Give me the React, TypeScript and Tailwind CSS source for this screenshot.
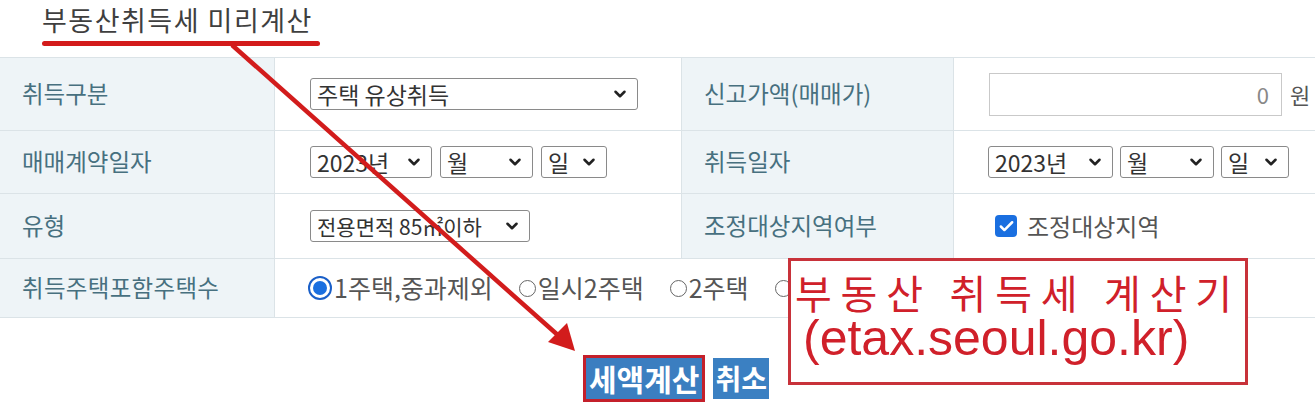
import { ChevronDown, Check } from 'lucide-react';

const kr = { fontFamily: '"Malgun Gothic", "Noto Sans CJK KR", sans-serif' };

function FakeSelect(props: { label: string; width: string; size?: string }) {
  return (
    <div
      className={`flex h-[32px] items-center justify-between rounded-[3px] border border-[#8a8a8a] bg-white pl-[6px] pr-[8px] text-[#333] ${props.size ?? 'text-[23px]'} ${props.width}`}
    >
      <span className="leading-none">{props.label}</span>
      <ChevronDown size={18} strokeWidth={3.4} className="shrink-0 text-[#222]" />
    </div>
  );
}

function Label(props: { text: string }) {
  return (
    <div className="flex items-center border-r border-b border-[#dbe3e7] bg-[#eef4f7] pl-[22px] text-[23.5px] text-[#47707f]">
      {props.text}
    </div>
  );
}

function Radio(props: { checked?: boolean; text?: string }) {
  return (
    <div className="flex items-center">
      {props.checked ? (
        <span className="flex h-[24px] w-[24px] items-center justify-center rounded-full border-[2px] border-[#1a5fc8] bg-white">
          <span className="h-[14px] w-[14px] rounded-full bg-[#1a6fe0]" />
        </span>
      ) : (
        <span className="h-[17px] w-[17px] rounded-full border-[1.5px] border-[#666] bg-white" />
      )}
      {props.text && <span className="ml-[2px]">{props.text}</span>}
    </div>
  );
}

export default function App() {
  return (
    <main className="relative h-[409px] w-[1315px] overflow-hidden bg-white" style={kr}>
      <div className="h-[57px] pl-[42px] pt-[3px]">
        <div className="text-[27px] leading-[33px] tracking-[1.5px] text-[#3f3f3f]">부동산취득세 미리계산</div>
        <div className="mt-[5px] h-[5px] w-[278px] rounded-full bg-[#d31b1b]" />
      </div>

      {/* table */}
      <div className="grid grid-cols-[275px_407px_272px_1fr] border-t border-[#dbe3e7]">
        {/* row 1 */}
        <div className="flex h-[73px] items-center border-r border-b border-[#dbe3e7] bg-[#eef4f7] pl-[22px] text-[23.5px] text-[#47707f]">
          취득구분
        </div>
        <div className="flex items-center border-r border-b border-[#dbe3e7] pl-[35px]">
          <FakeSelect label="주택 유상취득" width="w-[328px]" />
        </div>
        <Label text="신고가액(매매가)" />
        <div className="flex items-center border-b border-[#dbe3e7] pl-[35px] text-[22px] text-[#555]">
          <div className="flex h-[43px] w-[293px] items-center justify-end border border-[#c9c9c9] pr-[12px] text-[#888]">
            0
          </div>
          <span className="ml-[8px]">원</span>
        </div>

        {/* row 2 */}
        <div className="flex h-[63px] items-center border-r border-b border-[#dbe3e7] bg-[#eef4f7] pl-[22px] text-[23.5px] text-[#47707f]">
          매매계약일자
        </div>
        <div className="flex items-center gap-[8px] border-r border-b border-[#dbe3e7] pl-[35px]">
          <FakeSelect label="2023년" width="w-[122px]" />
          <FakeSelect label="월" width="w-[93px]" />
          <FakeSelect label="일" width="w-[66px]" />
        </div>
        <Label text="취득일자" />
        <div className="flex items-center gap-[7px] border-b border-[#dbe3e7] pl-[34px]">
          <FakeSelect label="2023년" width="w-[125px]" />
          <FakeSelect label="월" width="w-[94px]" />
          <FakeSelect label="일" width="w-[68px]" />
        </div>

        {/* row 3 */}
        <div className="flex h-[65px] items-center border-r border-b border-[#dbe3e7] bg-[#eef4f7] pl-[22px] text-[23.5px] text-[#47707f]">
          유형
        </div>
        <div className="flex items-center border-r border-b border-[#dbe3e7] pl-[35px]">
          <FakeSelect label="전용면적 85㎡이하" width="w-[220px]" size="text-[21px]" />
        </div>
        <Label text="조정대상지역여부" />
        <div className="flex items-center border-b border-[#dbe3e7] pl-[41px] text-[24px] text-[#555]">
          <span className="flex h-[22px] w-[22px] items-center justify-center rounded-[4px] bg-[#1a6fe0]">
            <Check size={17} strokeWidth={3.5} className="text-white" />
          </span>
          <span className="ml-[10px]">조정대상지역</span>
        </div>

        {/* row 4 */}
        <div className="flex h-[59px] items-center border-r border-b border-[#dbe3e7] bg-[#eef4f7] pl-[22px] text-[23.5px] tracking-[0.3px] text-[#47707f]">
          취득주택포함주택수
        </div>
        <div className="col-span-3 flex items-center gap-[26px] border-b border-[#dbe3e7] pl-[33px] text-[25px] text-[#555]">
          <Radio checked text="1주택,중과제외" />
          <Radio text="일시2주택" />
          <Radio text="2주택" />
          <Radio />
        </div>
      </div>

      {/* buttons */}
      <div className="flex items-center pl-[583px] pt-[37px]">
        <div className="border-[3px] border-[#c4202b] bg-[#3b7ec0] px-[3px] py-[2px] text-[30px] font-bold leading-[37px] text-white">
          세액계산
        </div>
        <div className="ml-[8px] bg-[#3b80c2] px-[2px] py-[2px] text-[28px] font-bold leading-[37px] text-white">
          취소
        </div>
      </div>

      {/* annotation box */}
      <div className="absolute left-[788px] top-[258px] flex h-[127px] w-[460px] flex-col border-[3px] border-[#c8323a] bg-white pl-[4px] pt-[11px] text-[#d0202a]">
        <div className="text-[40px] leading-[41px] tracking-[0.22em]">부동산 취득세 계산기</div>
        <div
          className="pl-[8px] text-[50px] leading-[50px]"
          style={{ fontFamily: '"Liberation Sans", Arial, sans-serif' }}
        >
          (etax.seoul.go.kr)
        </div>
      </div>

      {/* arrow */}
      <svg className="pointer-events-none absolute left-0 top-0" width="1315" height="409">
        <line x1="232" y1="45" x2="560" y2="337" stroke="#d21c1c" strokeWidth="4.5" />
        <polygon points="575,351 548,342 567,323" fill="#d21c1c" />
      </svg>
    </main>
  );
}
